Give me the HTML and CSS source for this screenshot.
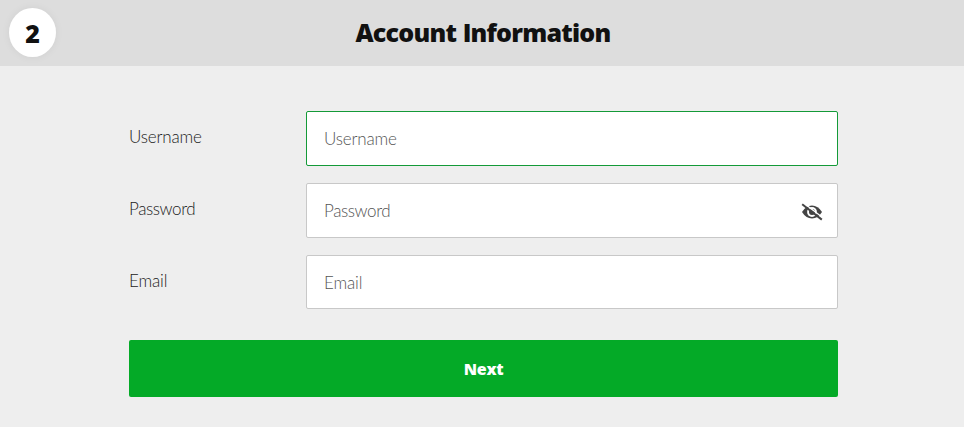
FILE: index.html
```html
<!DOCTYPE html>
<html lang="en">
<head>
<meta charset="utf-8">
<title>Account Information</title>
<link rel="stylesheet" href="styles.css">
</head>
<body>
<header class="step-header">
  <span class="step-number">2</span>
  <h1 class="step-title">Account Information</h1>
</header>
<form class="account-form">
  <div class="field">
    <label class="label username" for="username">Username</label>
    <div class="control active"><input class="username" id="username" type="text" placeholder="Username"></div>
  </div>
  <div class="field">
    <label class="label password" for="password">Password</label>
    <div class="control">
      <input class="password" id="password" type="password" placeholder="Password">
      <svg class="eye" viewBox="0 0 22 18" aria-hidden="true">
        <path class="eye-shape" d="M1 9Q5 2.5 11 2.5T21 9Q17 15.5 11 15.5T1 9Z"/>
        <circle class="eye-hole" cx="11" cy="9" r="4.9"/>
        <circle class="eye-shape" cx="11" cy="9" r="3"/>
        <path class="slash-gap" d="M2.8 .2 22 14.8"/>
        <path class="slash" d="M1.2 1.2 20.8 16.6"/>
      </svg>
    </div>
  </div>
  <div class="field last">
    <label class="label email" for="email">Email</label>
    <div class="control"><input class="email" id="email" type="email" placeholder="Email"></div>
  </div>
  <button class="next" type="button">Next</button>
</form>
</body>
</html>
```
FILE: styles.css
```css
* { box-sizing: border-box; }
body {
  margin: 0;
  min-height: 427px;
  background: #eee;
  color: #111;
  font-family: "Open Sans", sans-serif;
}
.step-header {
  display: grid;
  grid-template-columns: 47px 1fr 47px;
  align-items: center;
  height: 66px;
  padding: 0 9px 1px;
  background: #ddd;
}
.step-number {
  display: flex;
  align-items: center;
  justify-content: center;
  width: 47px;
  height: 49px;
  border-radius: 50%;
  background: #fff;
  box-shadow: 0 0 8px rgba(0, 0, 0, .06);
  font-size: 25px;
  font-weight: 800;
}
.step-title {
  margin: 0;
  padding: 0 0 1px 2px;
  font-size: 25px;
  font-weight: 800;
  line-height: 34px;
  letter-spacing: -.77px;
  word-spacing: .8px;
  text-align: center;
  white-space: nowrap;
}
.account-form {
  width: 709px;
  margin: 45px 0 0 129px;
}
.field {
  display: grid;
  grid-template-columns: 177px 532px;
  height: 55px;
  margin-bottom: 17px;
}
.field.last { height: 54px; margin-bottom: 31px; }
.label {
  justify-self: start;
  padding-top: 15px;
  color: #222;
  font: 300 17px/22px Lato, sans-serif;
}
.control {
  display: flex;
  align-items: center;
  padding: 1px 14px 0 17px;
  border: 1px solid #c8c8c8;
  border-radius: 2px;
  background: #fff;
}
.control.active { border-color: #149a38; }
.control input {
  flex: 1;
  min-width: 0;
  padding: 0;
  border: 0;
  outline: 0;
  background: transparent;
  font: 300 17px/22px Lato, sans-serif;
}
.control input::placeholder { color: #555; opacity: 1; }
.label.username, .control .username { letter-spacing: -.18px; }
.label.password, .control .password { letter-spacing: -.4px; }
.label.email, .control .email { letter-spacing: -.15px; }
.eye { width: 22px; height: 18px; margin-top: 2px; }
.eye-shape { fill: #444; }
.eye-hole { fill: #fff; }
.slash-gap { stroke: #fff; stroke-width: 1.4; }
.slash { stroke: #444; stroke-width: 2; }
.next {
  display: block;
  width: 100%;
  height: 57px;
  padding: 0;
  border: 0;
  border-radius: 2px;
  background: #04aa27;
  color: #fff;
  font: 800 16px/22px "Open Sans", sans-serif;
  letter-spacing: -.3px;
}
```
